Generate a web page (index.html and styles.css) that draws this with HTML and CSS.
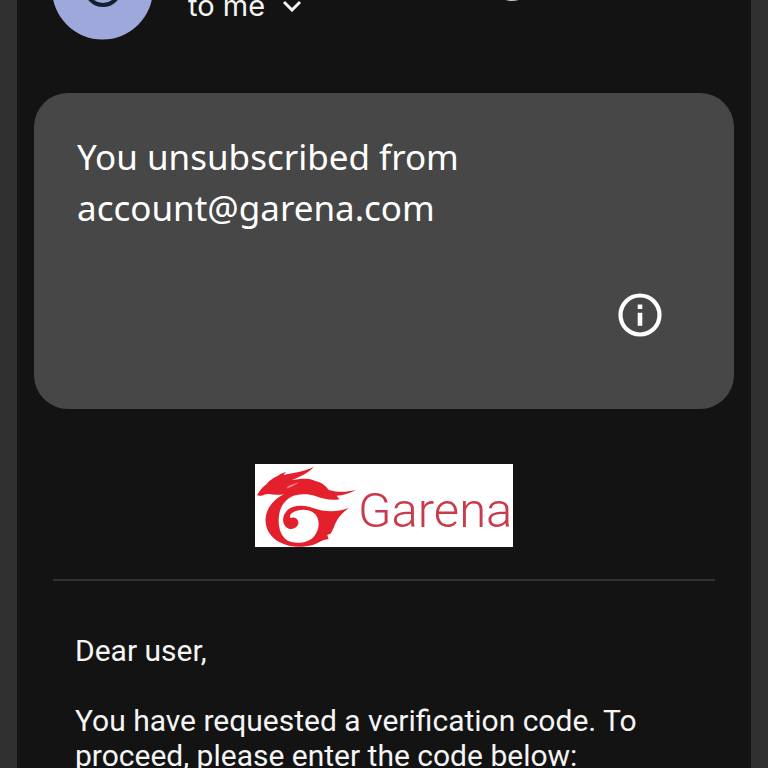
FILE: index.html
```html
<!DOCTYPE html>
<html lang="en">
<head>
<meta charset="utf-8">
<meta name="viewport" content="width=device-width, initial-scale=1">
<title>Garena verification</title>
<link rel="stylesheet" href="styles.css">
</head>
<body>
<main class="mail">
  <header class="sender">
    <svg class="avatar" viewBox="0 0 102 102" aria-hidden="true">
      <circle cx="50.5" cy="51" r="50.5" fill="#9fa8da"/>
      <circle cx="51" cy="50" r="17" fill="none" stroke="#15202f" stroke-width="4"/>
    </svg>
    <button class="recipient" type="button">to me
      <svg class="chevron" viewBox="0 0 20 12" aria-hidden="true"><path d="M2 2l8 8 8-8" fill="none" stroke="#f1f1f1" stroke-width="3"/></svg>
    </button>
    <svg class="reaction" viewBox="0 0 42 42" aria-hidden="true"><circle cx="21" cy="21" r="19" fill="none" stroke="#c4c7c5" stroke-width="4"/></svg>
  </header>

  <section class="notice">
    <p class="notice-text">You unsubscribed from<br>account@garena.com</p>
    <button class="info" type="button" aria-label="More information">
      <svg viewBox="0 0 44 44" aria-hidden="true">
        <circle cx="22" cy="22" r="19.5" fill="none" stroke="#fff" stroke-width="4.2"/>
        <path d="M19.7 11.5h4.6v4.6h-4.6zM19.7 19.8h4.6v13h-4.6z" fill="#fff"/>
      </svg>
    </button>
  </section>

  <article class="message">
    <div class="brand">
      <svg class="dragon" viewBox="45 42 309 250" aria-hidden="true">
        <path fill="#e3202b" d="M51 135C59 119 69 110 80 102C90 87 108 82 121 72L138 65L130 75C158 69 195 65 221 50C207 68 180 80 154 91C178 86 207 83 226 93C248 97 258 110 267 120C297 129 321 126 349 120C329 130 309 136 290 138L299 148C274 153 252 147 228 139C204 131 184 132 163 137C139 146 122 165 117 194C112 228 120 260 145 274C169 284 207 279 222 260C239 240 241 211 226 193C210 177 178 176 158 188C150 193 148 199 151 205C163 199 176 208 175 220C173 234 158 241 145 236C126 228 125 202 137 187C151 167 181 164 207 171C249 186 286 190 327 174C309 187 299 199 291 212C283 226 280 240 272 252L262 256L266 269C248 269 239 280 216 287C187 294 147 294 119 278C87 261 70 228 78 195C84 169 105 146 131 133C105 139 88 127 70 135C63 139 56 138 51 135Z"/>
        <path d="M141 111C153 103 166 100 177 98C166 105 156 112 141 116Z" fill="#fff" opacity=".4"/>
      </svg>
      <span class="wordmark">Garena</span>
    </div>
    <hr class="rule">
    <div class="copy">
      <p>Dear user,</p>
      <p>You have requested a verification code. To proceed, please enter the code below:</p>
    </div>
  </article>
</main>
</body>
</html>
```
FILE: styles.css
```css
* {
  box-sizing: border-box;
}

html,
body {
  height: 100%;
  overflow: hidden;
}

body {
  margin: 0;
  padding: 0 17px;
  background: #303030;
  color: #f5f5f5;
  font-family: Roboto, sans-serif;
}

p {
  margin: 0;
}

button {
  padding: 0;
  border: 0;
  background: none;
  color: inherit;
}

svg {
  display: block;
}

.mail {
  min-height: 100%;
  padding: 0 17px;
  background: #131313;
}

.sender {
  display: flex;
  align-items: flex-end;
  margin-top: -62px;
  padding: 0 18px;
}

.avatar {
  width: 102px;
  height: 102px;
}

.recipient {
  display: flex;
  align-items: center;
  gap: 17px;
  margin: 0 0 16px 34px;
  font: 400 29px/36px Inter, sans-serif;
}

.chevron {
  width: 20px;
  height: 12px;
}

.reaction {
  width: 42px;
  height: 42px;
  margin: 0 0 39px 189px;
}

.notice {
  display: flex;
  flex-direction: column;
  gap: 60px;
  margin-top: 53px;
  padding: 38px 72px 72px 43px;
  border-radius: 34px;
  background: #474747;
}

.notice-text {
  color: #fff;
  font: 35px/51px "Noto Sans", sans-serif;
}

.info {
  align-self: flex-end;
  width: 44px;
  height: 44px;
}

.message {
  padding: 55px 19px 0;
}

.brand {
  display: flex;
  align-items: center;
  width: 258px;
  height: 83px;
  margin: 0 auto;
  overflow: hidden;
  background: #fff;
}

.dragon {
  flex: none;
  width: 103px;
  height: 83px;
}

.wordmark {
  padding-top: 10px;
  color: #c93a4b;
  font: 300 49px/60px Roboto, sans-serif;
}

.rule {
  height: 2px;
  margin: 32px 0 0;
  border: 0;
  background: #333;
}

.copy {
  display: flex;
  flex-direction: column;
  gap: 35px;
  padding: 52px 22px 0;
  font-size: 30px;
  line-height: 35px;
}
```
